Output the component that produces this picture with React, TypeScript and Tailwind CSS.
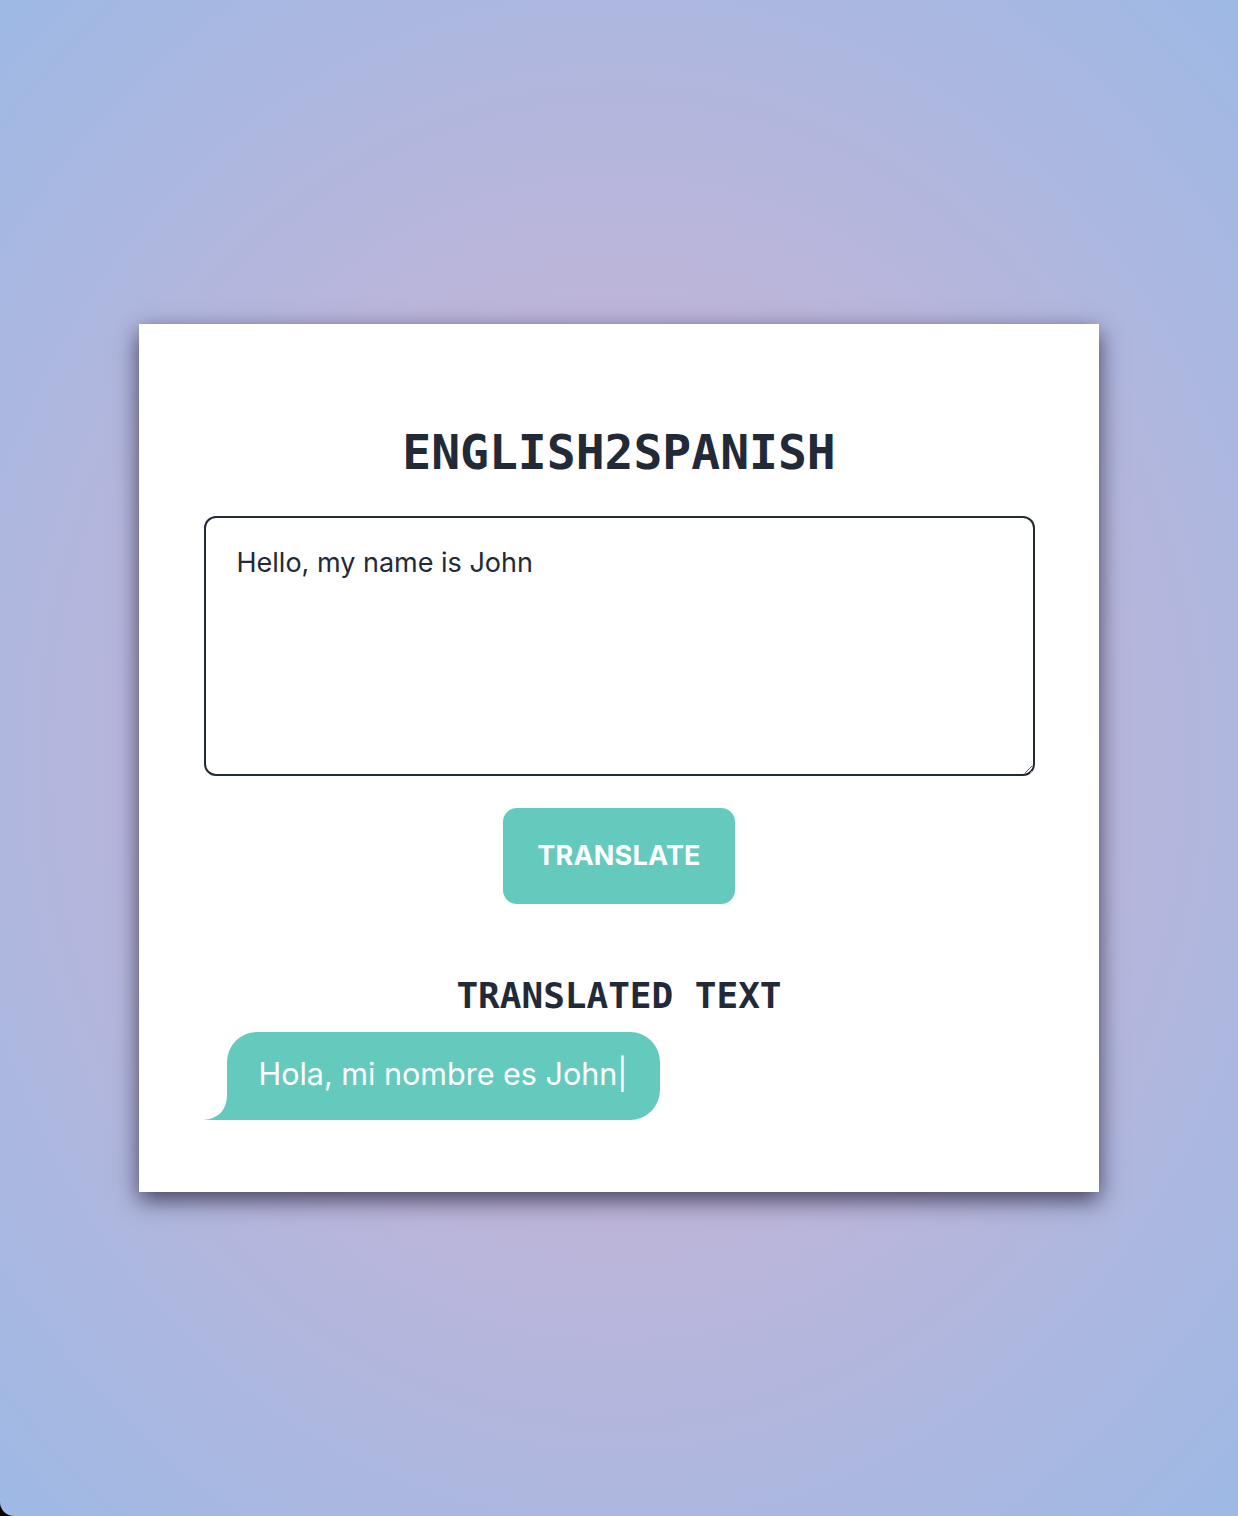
import React from "react";

export default function App() {
  return (
    <div className="bg-black w-[1238px] h-[1516px]">
      <div className="w-full h-full rounded-bl-[14px] flex items-start justify-center pt-[324px] bg-[radial-gradient(ellipse_72%_68%_at_50%_50%,#c9b4d6_0%,#bdb5da_45%,#9eb9e4_100%)]">
        <div className="w-[960px] h-[868px] bg-white shadow-[0_8px_22px_rgba(30,25,50,0.75)] flex flex-col items-center pt-[100px]">
          <h1 className="text-[48px] leading-[56px] font-bold text-[#222a38] font-['DejaVu_Sans_Mono',monospace]">
            ENGLISH2SPANISH
          </h1>
          <textarea
            defaultValue="Hello, my name is John"
            className="mt-[36px] w-[831px] h-[260px] border-2 border-[#222a38] rounded-[12px] px-[31px] pt-[28px] pb-[24px] text-[27px] leading-[34px] text-[#222a38] outline-none resize-y font-['Inter','Noto_Sans',sans-serif]"
          />
          <button className="mt-[32px] w-[232px] h-[96px] rounded-[14px] bg-[#64cabd] text-white text-[27px] font-bold tracking-[0.2px] font-['Inter','Noto_Sans',sans-serif]">
            TRANSLATE
          </button>
          <h2 className="mt-[72px] text-[36px] leading-[40px] font-bold text-[#222a38] font-['DejaVu_Sans_Mono',monospace]">
            TRANSLATED TEXT
          </h2>
          <div className="w-[831px] mt-[16px] flex">
            <div className="relative ml-[23px] h-[88px] bg-[#64cabd] rounded-[30px] rounded-bl-none flex items-center pl-[32px] pr-[33px] pb-[5px]">
              <svg className="absolute left-[-24px] bottom-0" width="25" height="26" viewBox="0 0 25 26">
                <path d="M0 26 Q 24 24 24 0 L 25 0 L 25 26 Z" fill="#64cabd" />
              </svg>
              <span className="text-white text-[30.5px] leading-[38px] font-['Inter','Noto_Sans',sans-serif]">
                Hola, mi nombre es John|
              </span>
            </div>
          </div>
        </div>
      </div>
    </div>
  );
}
